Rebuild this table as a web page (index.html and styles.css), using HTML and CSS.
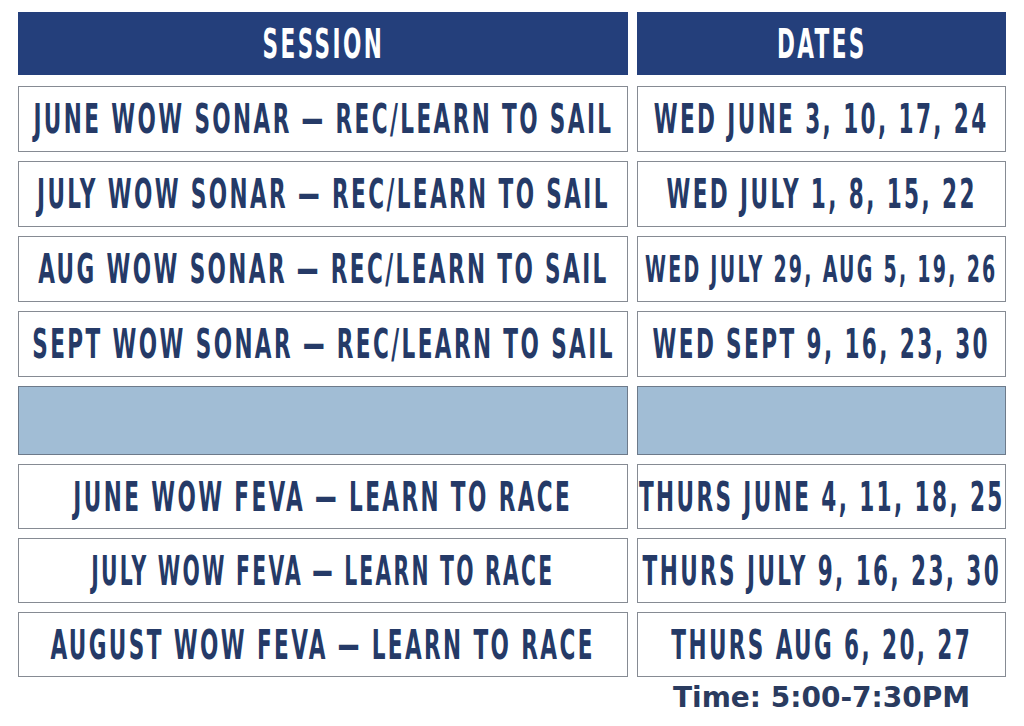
FILE: index.html
```html
<!DOCTYPE html>
<html>
<head>
<meta charset="utf-8">
<link rel="stylesheet" href="styles.css">
</head>
<body>
<div class="sheet">
  <div class="table">
    <div class="cell head"><span class="txt">SESSION</span></div>
    <div class="cell head"><span class="txt">DATES</span></div>

    <div class="cell"><span class="txt">JUNE WOW SONAR — REC/LEARN TO SAIL</span></div>
    <div class="cell"><span class="txt">WED JUNE 3, 10, 17, 24</span></div>

    <div class="cell"><span class="txt">JULY WOW SONAR — REC/LEARN TO SAIL</span></div>
    <div class="cell"><span class="txt">WED JULY 1, 8, 15, 22</span></div>

    <div class="cell"><span class="txt">AUG WOW SONAR — REC/LEARN TO SAIL</span></div>
    <div class="cell"><span class="txt small">WED JULY 29, AUG 5, 19, 26</span></div>

    <div class="cell"><span class="txt">SEPT WOW SONAR — REC/LEARN TO SAIL</span></div>
    <div class="cell"><span class="txt">WED SEPT 9, 16, 23, 30</span></div>

    <div class="cell blank"></div>
    <div class="cell blank"></div>

    <div class="cell"><span class="txt">JUNE WOW FEVA — LEARN TO RACE</span></div>
    <div class="cell"><span class="txt">THURS JUNE 4, 11, 18, 25</span></div>

    <div class="cell"><span class="txt narrow">JULY WOW FEVA — LEARN TO RACE</span></div>
    <div class="cell"><span class="txt">THURS JULY 9, 16, 23, 30</span></div>

    <div class="cell"><span class="txt">AUGUST WOW FEVA — LEARN TO RACE</span></div>
    <div class="cell"><span class="txt">THURS AUG 6, 20, 27</span></div>

    <div class="spacer"></div>
    <div class="time">Time: 5:00-7:30PM</div>
  </div>
</div>
</body>
</html>
```
FILE: styles.css
```css
html, body {
  margin: 0;
  padding: 0;
  background: #ffffff;
}
.sheet {
  padding: 12px 0 0 18px;
}
.table {
  display: grid;
  grid-template-columns: 610px 369px;
  grid-template-rows: 65px 66px 66px 66px 66px 69px 65px 65px 65px auto;
  column-gap: 9px;
  row-gap: 9px;
}
.cell {
  box-sizing: border-box;
  border: 1.5px solid #868b93;
  background: #ffffff;
  display: flex;
  align-items: center;
  justify-content: center;
  overflow: visible;
  white-space: nowrap;
}
.cell.head {
  height: 63px;
  border: none;
  background: #243f7b;
}
.cell.blank {
  background: #a1bdd5;
  border-color: #6d7a8a;
}
.txt {
  display: inline-block;
  font-family: "DejaVu Sans Condensed", "DejaVu Sans", sans-serif;
  font-stretch: condensed;
  font-weight: bold;
  font-size: 40px;
  line-height: 1;
  letter-spacing: 4px;
  color: #253a67;
  transform: scaleX(0.6);
}
.head .txt {
  color: #ffffff;
  letter-spacing: 4px;
}
.txt.small {
  font-size: 37px;
  transform: scaleX(0.57);
}
.txt.narrow {
  transform: scaleX(0.565);
}
.time {
  margin-top: -5px;
  text-align: center;
  font-family: "DejaVu Sans", sans-serif;
  font-weight: bold;
  font-size: 28px;
  line-height: 34px;
  color: #2a3b5f;
}
```
